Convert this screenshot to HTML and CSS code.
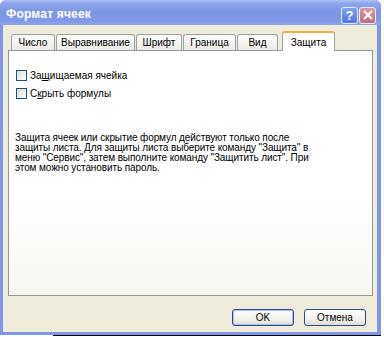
FILE: index.html
```html
<!DOCTYPE html>
<html lang="ru">

<head>
    <meta charset="utf-8">
    <title>Формат ячеек</title>
    <link rel="stylesheet" href="styles.css">
</head>

<body>
    <div class="okno">
        <div class="zagolovok">
            <span class="nazvanie">Формат ячеек</span>
            <div class="knopki">
                <span class="kn-pomosh">?</span>
                <span class="kn-zakryt">
                    <svg width="10" height="10" viewBox="0 0 10 10">
                        <path d="M1 1 L9 9 M9 1 L1 9" stroke="#fff" stroke-width="2" />
                    </svg>
                </span>
            </div>
        </div>

        <div class="telo">
            <nav class="vkladki">
                <span class="vkladka">Число</span>
                <span class="vkladka">Выравнивание</span>
                <span class="vkladka">Шрифт</span>
                <span class="vkladka">Граница</span>
                <span class="vkladka">Вид</span>
                <span class="vkladka aktivnaya">Защита</span>
            </nav>

            <section class="panel">
                <label class="flazhok"><span class="kvadrat"></span>За<u>щ</u>ищаемая ячейка</label>
                <label class="flazhok"><span class="kvadrat"></span>С<u>к</u>рыть формулы</label>

                <p class="tekst">
                    Защита ячеек или скрытие формул действуют только после<br>
                    защиты листа. Для защиты листа выберите команду "Защита" в<br>
                    меню "Сервис", затем выполните команду "Защитить лист". При<br>
                    этом можно установить пароль.
                </p>
            </section>

            <div class="niz">
                <button class="knopka po-umolch">OK</button>
                <button class="knopka">Отмена</button>
            </div>
        </div>
    </div>
    <div class="ten"></div>
</body>

</html>
```

FILE: styles.css
```css
body {
    margin: 0;
    background-color: #fff;
    font-family: "Liberation Sans", Arial, sans-serif;
    font-size: 10px;
    color: #000;
}

.okno {
    width: 381px;
    height: 335px;
    box-sizing: border-box;
    display: flex;
    flex-direction: column;
    padding: 0 4px 3px 3px;
    background-color: #7d96e6;
    border-radius: 6px 6px 0 0;
}

.zagolovok {
    height: 25px;
    flex-shrink: 0;
    display: flex;
    align-items: center;
    justify-content: space-between;
    margin: 0 -4px 0 -3px;
    padding: 0 5px 0 6px;
    border-radius: 6px 6px 0 0;
    background: linear-gradient(#b3c4f3 0, #8ea7ec 3px, #7c96e6 12px, #7f98e7 20px, #90a6eb 25px);
}

.nazvanie {
    color: #fff;
    font-weight: bold;
    font-size: 12px;
    letter-spacing: 0.2px;
    padding-top: 2px;
}

.knopki {
    display: flex;
    gap: 1px;
    padding-top: 5px;
}

.kn-pomosh,
.kn-zakryt {
    width: 15px;
    height: 15px;
    border: 1px solid #e6ecfb;
    border-radius: 3px;
    display: flex;
    align-items: center;
    justify-content: center;
    color: #fff;
    font-weight: bold;
    font-size: 13px;
}

.kn-pomosh {
    background: linear-gradient(#7fa0f5, #4f75e2);
}

.kn-zakryt {
    background: linear-gradient(#d99a9a, #c06f74);
}

.telo {
    flex: 1;
    display: flex;
    flex-direction: column;
    background-color: #efecdc;
    padding: 6px 4px 0 5px;
}

.vkladki {
    display: flex;
    align-items: flex-end;
    height: 19px;
    padding-left: 3px;
    gap: 1px;
}

.vkladka {
    height: 16px;
    box-sizing: border-box;
    border: 1px solid #9aa3a4;
    border-bottom: none;
    border-radius: 3px 3px 0 0;
    background: linear-gradient(#fefefe, #ecebe5);
    display: flex;
    align-items: center;
    justify-content: center;
}

/* ширины вкладок как в оригинале */
.vkladka:nth-child(1) { width: 44px; }
.vkladka:nth-child(2) { width: 79px; }
.vkladka:nth-child(3) { width: 46px; }
.vkladka:nth-child(4) { width: 53px; }
.vkladka:nth-child(5) { width: 41px; }

.vkladka.aktivnaya {
    width: 53px;
    height: 20px;
    margin-bottom: -1px;
    margin-left: 3px;
    background: #fff;
    border-top: 2px solid #f0b040;
    position: relative;
    z-index: 1;
}

.panel {
    height: 246px;
    box-sizing: border-box;
    border: 1px solid #919b9c;
    background: linear-gradient(#fff 60%, #f7f6ef);
    padding: 19px 7px 0 7px;
}

.flazhok {
    display: flex;
    align-items: center;
    height: 10px;
    margin-bottom: 8px;
}

.kvadrat {
    width: 9px;
    height: 9px;
    border: 1px solid #1c5180;
    background: linear-gradient(135deg, #dcdcd6, #fff);
    margin-right: 3px;
}

.tekst {
    margin: 35px 0 0 -1px;
    line-height: 10px;
    letter-spacing: -0.1px;
}

.niz {
    display: flex;
    justify-content: flex-end;
    gap: 10px;
    margin-top: 13px;
    padding-right: 7px;
}

.knopka {
    width: 62px;
    height: 17px;
    padding: 0;
    font-family: inherit;
    font-size: 10px;
    color: #000;
    border: 1px solid #2a4d88;
    border-radius: 3px;
    background: linear-gradient(#fff, #f0efe8 70%, #dcdad0);
}

.po-umolch {
    box-shadow: inset 0 0 0 1px #a7c0f0;
}

.ten {
    margin-left: 53px;
    width: 328px;
    height: 1px;
    background-color: #000;
}
```
